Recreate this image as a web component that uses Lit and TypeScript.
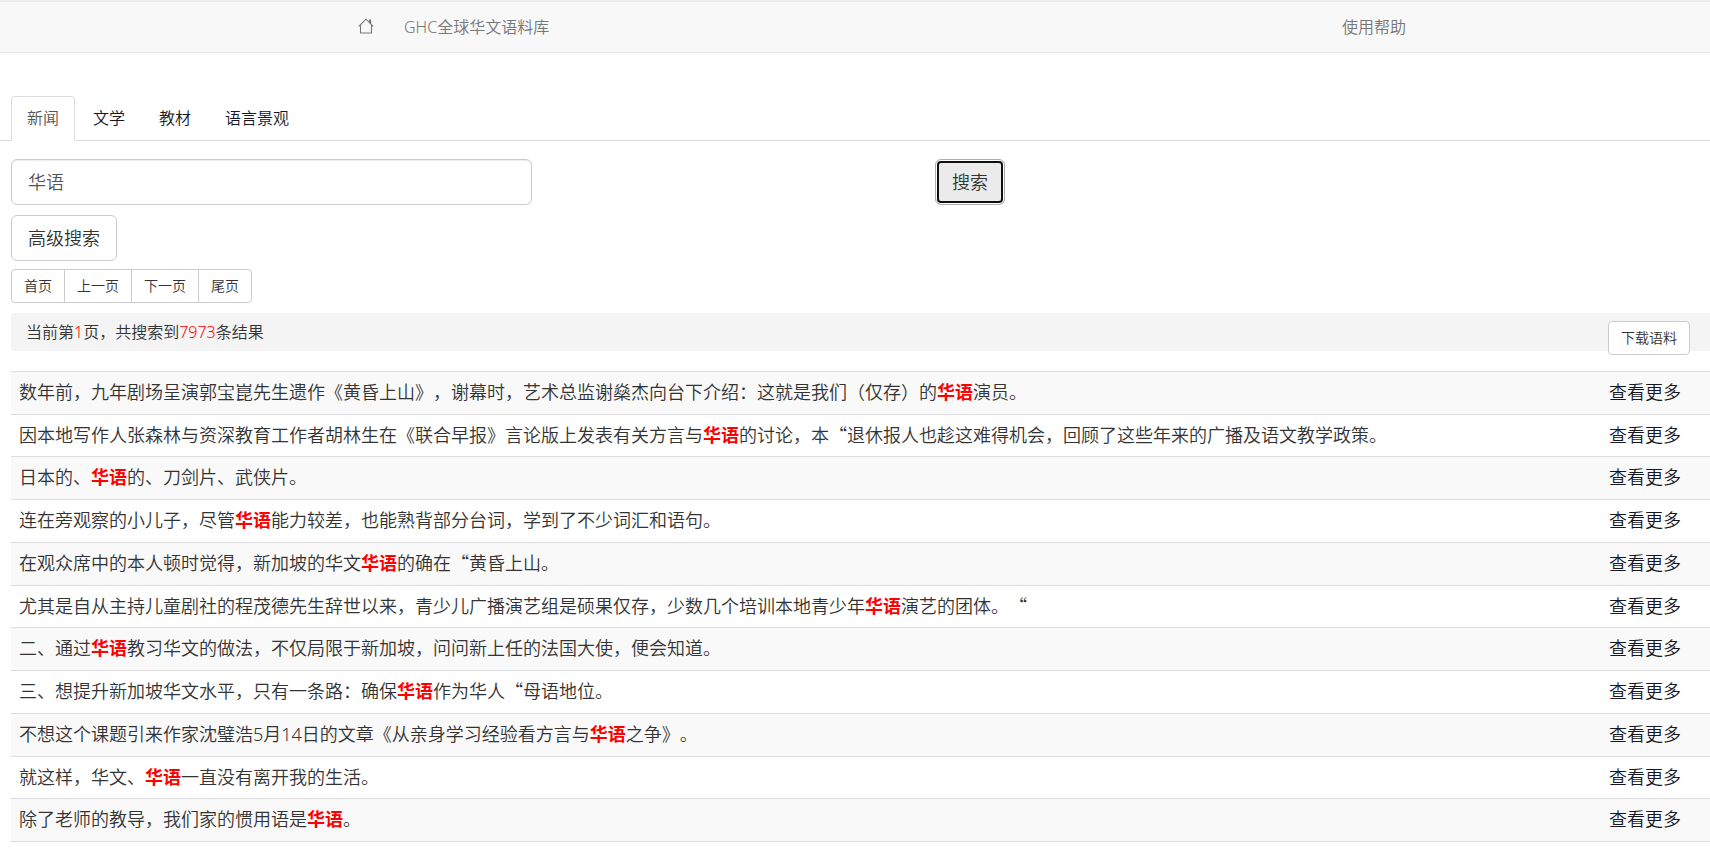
import { LitElement, html, css } from "lit";
import { customElement, state } from "lit/decorators.js";

type Part = string | { mark: string } | { num: string };

const HIT: Part = { mark: "华语" };

const ROWS: Part[][] = [
  ["数年前，九年剧场呈演郭宝崑先生遗作《黄昏上山》，谢幕时，艺术总监谢燊杰向台下介绍：这就是我们（仅存）的", HIT, "演员。"],
  ["因本地写作人张森林与资深教育工作者胡林生在《联合早报》言论版上发表有关方言与", HIT, "的讨论，本“退休报人也趁这难得机会，回顾了这些年来的广播及语文教学政策。"],
  ["日本的、", HIT, "的、刀剑片、武侠片。"],
  ["连在旁观察的小儿子，尽管", HIT, "能力较差，也能熟背部分台词，学到了不少词汇和语句。"],
  ["在观众席中的本人顿时觉得，新加坡的华文", HIT, "的确在“黄昏上山。"],
  ["尤其是自从主持儿童剧社的程茂德先生辞世以来，青少儿广播演艺组是硕果仅存，少数几个培训本地青少年", HIT, "演艺的团体。“"],
  ["二、通过", HIT, "教习华文的做法，不仅局限于新加坡，问问新上任的法国大使，便会知道。"],
  ["三、想提升新加坡华文水平，只有一条路：确保", HIT, "作为华人“母语地位。"],
  ["不想这个课题引来作家沈璧浩", { num: "5" }, "月", { num: "14" }, "日的文章《从亲身学习经验看方言与", HIT, "之争》。"],
  ["就这样，华文、", HIT, "一直没有离开我的生活。"],
  ["除了老师的教导，我们家的惯用语是", HIT, "。"],
];

const TABS = ["新闻", "文学", "教材", "语言景观"];
const PAGES = ["首页", "上一页", "下一页", "尾页"];

const renderPart = (p: Part) =>
  typeof p === "string"
    ? p
    : "mark" in p
      ? html`<b class="hit">${p.mark}</b>`
      : html`<span class="num">${p.num}</span>`;

@customElement("app-root")
export class AppRoot extends LitElement {
  @state() private tab = 0;
  @state() private query = "华语";

  static styles = css`
    :host {
      display: block;
      min-height: 100vh;
      overflow: hidden;
      box-sizing: border-box;
      background: #fff;
      color: #333;
      font-family: "Noto Sans CJK SC", "Noto Sans", sans-serif;
      font-size: 16px;
      font-weight: 350;
      line-height: 23px;
      text-spacing-trim: space-all;
    }
    *, *::before, *::after { box-sizing: border-box; }
    a { color: inherit; text-decoration: none; }
    button, input { font: inherit; color: inherit; }
    .num { font-family: "Noto Sans", sans-serif; font-weight: 300; line-height: 1; }

    .navbar {
      background: #f8f8f8;
      border-top: 2px solid #ebebeb;
      border-bottom: 1px solid #e7e7e7;
      color: #777;
    }
    .nav {
      display: flex;
      align-items: center;
      max-width: 1132px;
      margin: 0 auto;
      padding-left: 54px;
    }
    .nav a { display: flex; align-items: center; height: 50px; padding: 0 15px 2px; }
    .nav a:last-child { margin-left: auto; }
    .home { display: block; width: 16px; height: 16px; }

    .tabs {
      display: flex;
      gap: 2px;
      margin-top: 43px;
      padding-left: 11px;
      border-bottom: 1px solid #ddd;
    }
    .tab {
      height: 45px;
      margin-bottom: -1px;
      padding: 0 15px 2px;
      border: 1px solid transparent;
      border-radius: 4px 4px 0 0;
      background: none;
      color: #14171f;
      cursor: pointer;
    }
    .tab.active {
      border-color: #ddd;
      border-bottom-color: #fff;
      background: #fff;
      color: #555;
    }

    .content { padding: 18px 0 0 11px; }
    .search {
      display: grid;
      grid-template-columns: 521fr 403fr 775fr;
      margin-bottom: 10px;
    }
    .btn {
      padding: 0 12px 2px;
      border: 1px solid #ccc;
      border-radius: 4px;
      background: #fff;
      cursor: pointer;
    }
    .btn.lg, .box {
      height: 46px;
      padding: 0 16px 2px;
      border-radius: 6px;
      font-size: 18px;
    }
    .box {
      width: 100%;
      border: 1px solid #ccc;
      box-shadow: inset 0 1px 1px rgba(0, 0, 0, 0.075);
      color: #555;
      outline: none;
    }
    .go { grid-column: 3; justify-self: start; }
    .go.btn {
      border-color: #adadad;
      background: #ebebeb;
      box-shadow: inset 0 0 0 1px #fff;
      outline: 2px solid #101010;
      outline-offset: -4px;
    }
    .sm { height: 34px; font-size: 14px; }

    .pager { display: flex; margin: 8px 0 10px; }
    .pager .btn { border-radius: 0; }
    .pager .btn + .btn { margin-left: -1px; }
    .pager .btn:first-child { border-radius: 4px 0 0 4px; }
    .pager .btn:last-child { border-radius: 0 4px 4px 0; }

    .summary {
      display: flex;
      justify-content: space-between;
      height: 38px;
      margin-bottom: 20px;
      padding: 8px 20px 0 15px;
      border-radius: 4px 0 0 4px;
      background: #f4f4f4;
    }
    .summary p { margin: 0; line-height: 21px; }
    .red { color: #f00; }

    .results {
      width: 100%;
      border-collapse: collapse;
      border-bottom: 1px solid #ddd;
      font-size: 18px;
      line-height: 1.43;
    }
    .results td { padding: 7px 8px 9px; border-top: 1px solid #ddd; }
    .results tr:nth-child(odd) { background: #f9f9f9; }
    .results .more { width: 109px; color: #14171f; white-space: nowrap; }
    .hit { color: #f00; font-weight: 700; }
  `;

  render() {
    return html`
      <header class="navbar">
        <nav class="nav">
          <a href="#" aria-label="首页">
            <svg class="home" viewBox="0 0 16 16" fill="none" stroke="#777" stroke-width="1.1" aria-hidden="true">
              <path d="M0.8 8.4 8 1.2l7.2 7.2M2.5 7v8h11V7" />
              <path d="M11 1.6h2.2v4.8L11 4.2z" fill="#777" stroke="none" />
            </svg>
          </a>
          <a href="#"><span><span class="num">GHC</span>全球华文语料库</span></a>
          <a href="#">使用帮助</a>
        </nav>
      </header>

      <div class="tabs" role="tablist">
        ${TABS.map(
          (t, i) => html`<button
            class="tab ${i === this.tab ? "active" : ""}"
            role="tab"
            aria-selected=${i === this.tab}
            @click=${() => (this.tab = i)}
          >${t}</button>`
        )}
      </div>

      <main class="content">
        <form class="search" @submit=${(e: Event) => e.preventDefault()}>
          <input
            class="box"
            type="text"
            aria-label="搜索"
            .value=${this.query}
            @input=${(e: Event) => (this.query = (e.target as HTMLInputElement).value)}
          />
          <button class="btn lg go" type="submit">搜索</button>
        </form>
        <button class="btn lg" type="button">高级搜索</button>
        <div class="pager">
          ${PAGES.map((p) => html`<button class="btn sm" type="button">${p}</button>`)}
        </div>
        <div class="summary">
          <p>当前第<span class="num red">1</span>页，共搜索到<span class="num red">7973</span>条结果</p>
          <button class="btn sm" type="button">下载语料</button>
        </div>
        <table class="results">
          <tbody>
            ${ROWS.map(
              (r) => html`<tr>
                <td>${r.map(renderPart)}</td>
                <td class="more"><a href="#">查看更多</a></td>
              </tr>`
            )}
          </tbody>
        </table>
      </main>
    `;
  }
}
